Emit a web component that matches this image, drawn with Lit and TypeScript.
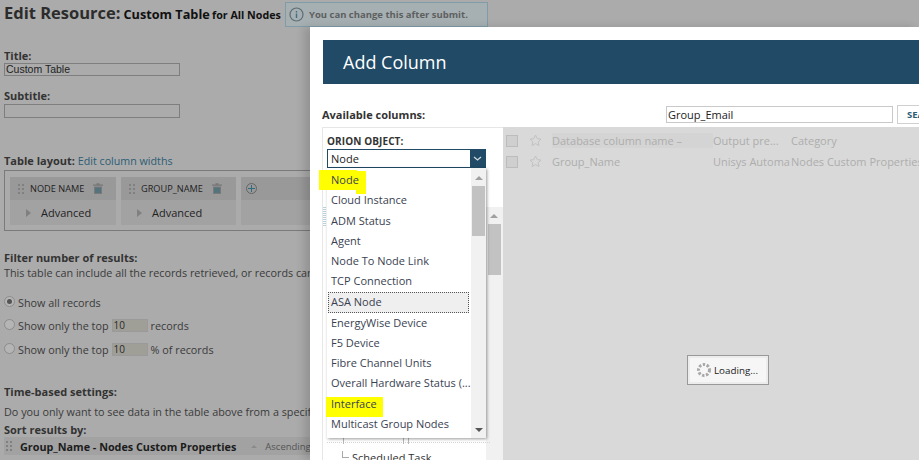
import { LitElement, html, css, svg } from 'lit';
import { customElement } from 'lit/decorators.js';

const OBJECTS = [
  { label: 'Node', cls: 'mark-node' },
  { label: 'Cloud Instance' },
  { label: 'ADM Status' },
  { label: 'Agent' },
  { label: 'Node To Node Link' },
  { label: 'TCP Connection' },
  { label: 'ASA Node', cls: 'focus' },
  { label: 'EnergyWise Device' },
  { label: 'F5 Device' },
  { label: 'Fibre Channel Units' },
  { label: 'Overall Hardware Status (...' },
  { label: 'Interface', cls: 'mark-iface' },
  { label: 'Multicast Group Nodes' },
];

const trash = svg`<svg width="10" height="11" viewBox="0 0 10 11"><path d="M3.5 .8h3M0 2.2h10" stroke="#777" stroke-width="1.2" fill="none"/><path d="M1 3.5h8V11H1z" fill="#7a7a7a"/><path d="M3 4.5V10M5 4.5V10M7 4.5V10" stroke="#2f6c80" stroke-width="1"/></svg>`;
const grip = svg`<svg width="6" height="10" viewBox="0 0 6 10"><g fill="#808080"><rect width="2" height="2"/><rect x="4" width="2" height="2"/><rect y="4" width="2" height="2"/><rect x="4" y="4" width="2" height="2"/><rect y="8" width="2" height="2"/><rect x="4" y="8" width="2" height="2"/></g></svg>`;
const star = svg`<svg width="13" height="13" viewBox="0 0 13 13"><path d="M6.5 1l1.7 3.6 3.8.5-2.8 2.6.7 3.8-3.4-1.9-3.4 1.9.7-3.8L1 5.1l3.8-.5z" fill="none" stroke="#c2c2c2"/></svg>`;

@customElement('app-root')
export class AppRoot extends LitElement {
  static styles = css`
    :host {
      display: block;
      position: relative;
      width: 919px;
      height: 460px;
      overflow: hidden;
      background: #ababab;
      font-family: 'Open Sans', 'Noto Sans', sans-serif;
      font-size: 10.8px;
      color: #2b2b2b;
    }

    .page {
      display: flex;
      flex-direction: column;
      width: 310px;
      padding: 0 0 0 4px;
      box-sizing: border-box;
      white-space: nowrap;
    }

    .title-row {
      display: flex;
      align-items: baseline;
      height: 27px;
      width: 480px;
      padding-top: 1px;
      box-sizing: border-box;
      font-weight: 700;
      color: #222;
    }
    .title-row h1 {
      margin: 0 3px 0 0;
      font-size: 16.5px;
      line-height: 24px;
      color: #2c2c2c;
    }
    .title-row .res {
      font-size: 12.7px;
      color: #111;
    }
    .title-row .res small {
      font-size: 10.7px;
      margin-left: -1px;
    }

    .hint {
      position: absolute;
      left: 285px;
      top: 2px;
      width: 203px;
      height: 25px;
      box-sizing: border-box;
      display: flex;
      align-items: center;
      gap: 5px;
      padding-left: 3px;
      white-space: nowrap;
      background: #a6afb2;
      border: 1px solid #7f9ca8;
      font-size: 9.5px;
      font-weight: 700;
      color: #5d6060;
    }

    label.head {
      display: block;
      font-weight: 700;
      font-size: 11px;
      line-height: 15px;
      color: #333;
    }
    .title-label { margin-top: 21px; }
    .sub-label { margin-top: 12px; }

    .text {
      width: 176px;
      height: 13px;
      box-sizing: border-box;
      border: 1px solid #7e7e7e;
      font-family: 'Liberation Sans', sans-serif;
      font-size: 10.5px;
      line-height: 11px;
      padding-left: 1px;
      color: #222;
    }
    .subtitle { height: 14px; margin-top: 1px; }

    .layout-label { margin-top: 35px; }
    .layout-label a { color: #2d5d75; font-weight: 400; font-size: 10.7px; }

    .columns {
      display: flex;
      gap: 5px;
      width: 330px;
      height: 61px;
      margin-top: 1px;
      padding: 6px 5px;
      box-sizing: border-box;
      border: 1px solid #7a7a7a;
    }
    .col {
      display: flex;
      flex-direction: column;
      background: #a2a2a2;
      flex: none;
      height: 48px;
    }
    .col .top {
      display: flex;
      align-items: center;
      height: 23px;
      padding-left: 8px;
      background: #999;
      color: #222;
      font-size: 9.2px;
    }
    .col .top .name { margin-left: 6px; }
    .col .top .del { margin-left: 9px; display: flex; }
    .col .adv {
      display: flex;
      align-items: center;
      height: 25px;
      padding-left: 16px;
      gap: 10px;
      color: #222;
      font-size: 11px;
    }
    .tri {
      width: 0;
      height: 0;
      border-left: 5px solid #808080;
      border-top: 4px solid transparent;
      border-bottom: 4px solid transparent;
    }
    .col.add { flex: 1; }
    .plus {
      width: 9px;
      height: 9px;
      border: 1px solid #666;
      border-radius: 50%;
      margin-left: 5px;
      position: relative;
    }
    .plus::before, .plus::after {
      content: '';
      position: absolute;
      background: #2f6c80;
    }
    .plus::before { left: 1px; right: 1px; top: 4px; height: 1px; }
    .plus::after { top: 1px; bottom: 1px; left: 4px; width: 1px; }

    .filter-label { margin-top: 19px; }
    .filter-desc, .time-desc { line-height: 16px; color: #3a3a3a; }

    .radios {
      display: flex;
      flex-direction: column;
      gap: 7.5px;
      margin-top: 13px;
    }
    .radio {
      display: flex;
      align-items: center;
      height: 16px;
      color: #3a3a3a;
    }
    .dot {
      width: 9px;
      height: 9px;
      border-radius: 50%;
      border: 1px solid #8c8c8c;
      background: #b5b5b5;
      margin-right: 3px;
      margin-bottom: 2px;
      position: relative;
    }
    .dot.on::after {
      content: '';
      position: absolute;
      inset: 2px;
      border-radius: 50%;
      background: #555;
    }
    .num {
      width: 36px;
      height: 13px;
      margin: 0 3px;
      padding-left: 1px;
      box-sizing: border-box;
      background: #a09f97;
      border: 1px solid #9a9a9a;
      font-size: 10px;
      line-height: 11px;
      color: #2a2a2a;
    }

    .time-label { margin-top: 27px; }
    .time-desc { margin-top: 5px; }
    .sort-label { margin-top: 2px; line-height: 14px; }

    .sort {
      display: flex;
      align-items: center;
      width: 330px;
      height: 18px;
      background: #a2a2a2;
      padding-left: 2px;
      box-sizing: border-box;
    }
    .sort .g { display: flex; }
    .sort b { margin-left: 8px; font-size: 10.8px; color: #1c1c1c; }
    .sort .up {
      margin-left: 15px;
      width: 0;
      height: 0;
      border-bottom: 3px solid #8a8a8a;
      border-left: 3px solid transparent;
      border-right: 3px solid transparent;
    }
    .sort .dir { margin-left: 8px; font-size: 9.5px; color: #555; }

    /* the dialog floats over the dimmed page */
    .modal {
      position: absolute;
      left: 310px;
      top: 27px;
      width: 609px;
      height: 433px;
      background: #fff;
      box-shadow: -6px 0 8px rgba(0, 0, 0, 0.14);
      white-space: nowrap;
    }
    .modal-head {
      margin: 13px 0 0 13px;
      height: 44px;
      display: flex;
      align-items: center;
      padding-left: 20px;
      background: #204a66;
      color: #fff;
      font-size: 18px;
    }
    .search-row {
      display: flex;
      align-items: center;
      height: 20px;
      margin-top: 20px;
      margin-left: 12px;
    }
    .search-row label {
      font-weight: 700;
      font-size: 11px;
      color: #333;
      width: 344px;
      flex: none;
    }
    .search {
      width: 227px;
      height: 17px;
      flex: none;
      box-sizing: border-box;
      border: 1px solid #c9c9c9;
      padding-left: 1px;
      font-size: 11px;
      line-height: 15px;
      color: #222;
    }
    .search-btn {
      margin-left: 4px;
      width: 60px;
      height: 19px;
      flex: none;
      box-sizing: border-box;
      border: 1px solid #d0d0d0;
      padding-left: 9px;
      font-size: 9.5px;
      line-height: 17px;
      font-weight: 700;
      color: #2d5d75;
    }

    .body {
      display: flex;
      margin: 3px 0 0 12px;
      height: 340px;
    }
    .side {
      position: relative;
      width: 181px;
      flex: none;
      box-sizing: border-box;
      border: 1px solid #e6e6e6;
      border-width: 1px 0 0 1px;
      padding: 7px 0 0 4px;
    }
    .side .obj {
      font-size: 10px;
      font-weight: 700;
      color: #333;
      line-height: 13px;
      letter-spacing: 0.1px;
    }
    .select {
      display: flex;
      width: 159px;
      height: 19px;
      box-sizing: border-box;
      border: 1px solid #204a66;
      font-size: 11px;
      line-height: 17px;
      padding-left: 3px;
      margin-top: 1px;
      color: #222;
    }
    .select span { flex: 1; }
    .select i {
      width: 15px;
      background: #204a66;
      display: flex;
      align-items: center;
      justify-content: center;
    }

    .side-bar {
      position: absolute;
      right: 0;
      top: 79px;
      width: 17px;
      bottom: 0;
      background: #f1f1f1;
    }
    .side-bar .thumb {
      position: absolute;
      left: 2px;
      right: 2px;
      top: 17px;
      height: 51px;
      background: #c2c2c2;
    }
    .arrow-up, .arrow-down {
      position: absolute;
      left: 4px;
      width: 0;
      height: 0;
      border-left: 4px solid transparent;
      border-right: 4px solid transparent;
    }
    .arrow-up { top: 7px; border-bottom: 4px solid #a0a0a0; }
    .arrow-down { bottom: 6px; border-top: 4px solid #555; }

    .splitter {
      position: absolute;
      left: 0;
      top: 79px;
      width: 3px;
      height: 20px;
      background: repeating-linear-gradient(#b9d2dc 0 1px, #fff 1px 2px);
    }

    .tree-line {
      position: absolute;
      left: 4px;
      right: 13px;
      top: 314px;
      border-top: 1px dotted #d5d5d5;
    }
    .tick {
      position: absolute;
      top: 310px;
      width: 1px;
      height: 6px;
      background: #b8b8b8;
    }

    .tree-leaf {
      position: absolute;
      left: 19px;
      top: 322px;
      display: flex;
      align-items: flex-end;
      font-size: 11px;
      color: #333;
    }
    .tree-leaf::before {
      content: '';
      width: 6px;
      height: 6px;
      border-left: 1px solid #aaa;
      border-bottom: 1px solid #aaa;
      margin: 0 3px 7px 0;
    }

    .drop {
      position: absolute;
      left: 4px;
      top: 40px;
      width: 159px;
      height: 270px;
      box-sizing: border-box;
      background: #fff;
      box-shadow: 1px 1px 3px rgba(0, 0, 0, 0.4);
      z-index: 2;
    }
    .drop ul {
      list-style: none;
      margin: 0;
      padding: 2px 0 0 1px;
    }
    .drop li {
      position: relative;
      height: 20.25px;
      line-height: 20px;
      padding-left: 3px;
      width: 141px;
      box-sizing: border-box;
      font-size: 11px;
      color: #3a3f52;
    }
    .drop li.focus {
      background: #efefef;
      outline: 1px dotted #555;
      outline-offset: -1px;
      height: 21px;
    }
    .drop li span { position: relative; z-index: 1; }
    .mark-node::before, .mark-node::after, .mark-iface::before {
      content: '';
      position: absolute;
      background: #ff0;
    }
    .mark-node::before { left: -9px; top: 0; width: 38px; height: 20px; }
    .mark-node::after { left: 28px; top: 1px; width: 10px; height: 23px; }
    .mark-iface::before { left: -2px; top: 3px; width: 57px; height: 20px; }
    .drop .bar {
      position: absolute;
      right: 0;
      top: 0;
      bottom: 0;
      width: 15px;
      background: #f1f1f1;
    }
    .drop .bar .thumb {
      position: absolute;
      left: 1px;
      right: 1px;
      top: 18px;
      height: 50px;
      background: #c2c2c2;
    }

    .grid {
      flex: 1;
      background: #d9d9d9;
      color: #adadad;
      font-size: 11px;
      position: relative;
    }
    .grid-row {
      display: flex;
      align-items: center;
      height: 21px;
      padding-left: 3px;
    }
    .grid-row.first { margin-top: 3px; }
    .cb {
      width: 10px;
      height: 10px;
      border: 1px solid #bcbcbc;
      background: #cfcfcf;
      margin-right: 11px;
      flex: none;
    }
    .grid-row .c1 { width: 161px; margin-left: 10px; flex: none; }
    .grid-row .c2 { width: 78px; flex: none; overflow: hidden; }
    .grid-row .c3 { flex: none; }
    .grid-row.first .c1 { background: #d4d4d4; }

    .loading {
      position: absolute;
      left: 184px;
      top: 228px;
      width: 82px;
      height: 30px;
      box-sizing: border-box;
      border: 1px solid #999;
      background: #f6f6f6;
      box-shadow: inset 0 0 0 2px #ececec;
      display: flex;
      align-items: center;
      gap: 2px;
      padding-left: 8px;
      font-size: 9.8px;
      color: #222;
    }
  `;

  render() {
    return html`
      <div class="page">
        <div class="title-row">
          <h1>Edit Resource:</h1>
          <span class="res">Custom Table <small>for All Nodes</small></span>
        </div>
        <label class="head title-label">Title:</label>
        <div class="text">Custom Table</div>
        <label class="head sub-label">Subtitle:</label>
        <div class="text subtitle"></div>

        <label class="head layout-label">Table layout: <a>Edit column widths</a></label>
        <div class="columns">
          <div class="col" style="width:106px">
            <div class="top">${grip}<span class="name">NODE NAME</span><span class="del">${trash}</span></div>
            <div class="adv"><span class="tri"></span>Advanced</div>
          </div>
          <div class="col" style="width:115px">
            <div class="top">${grip}<span class="name">GROUP_NAME</span><span class="del">${trash}</span></div>
            <div class="adv"><span class="tri"></span>Advanced</div>
          </div>
          <div class="col add">
            <div class="top" style="padding-left:0"><span class="plus"></span></div>
          </div>
        </div>

        <label class="head filter-label">Filter number of results:</label>
        <div class="filter-desc">This table can include all the records retrieved, or records can</div>
        <div class="radios">
          <div class="radio"><span class="dot on"></span>Show all records</div>
          <div class="radio"><span class="dot"></span>Show only the top<span class="num">10</span>records</div>
          <div class="radio"><span class="dot"></span>Show only the top<span class="num">10</span>% of records</div>
        </div>

        <label class="head time-label">Time-based settings:</label>
        <div class="time-desc">Do you only want to see data in the table above from a specific</div>
        <label class="head sort-label">Sort results by:</label>
        <div class="sort">
          <span class="g">${grip}</span>
          <b>Group_Name - Nodes Custom Properties</b>
          <span class="up"></span>
          <span class="dir">Ascending</span>
        </div>
      </div>

      <div class="hint">
        <svg width="15" height="15" viewBox="0 0 15 15">
          <circle cx="7.5" cy="7.5" r="6.5" fill="none" stroke="#5d6d75" stroke-width="1.2"></circle>
          <path d="M7.5 6.5v4.5M7.5 4v1.4" stroke="#3f6f85" stroke-width="1.4"></path>
        </svg>
        You can change this after submit.
      </div>

      <div class="modal">
        <div class="modal-head">Add Column</div>
        <div class="search-row">
          <label>Available columns:</label>
          <div class="search">Group_Email</div>
          <div class="search-btn">SEARCH</div>
        </div>
        <div class="body">
          <div class="side">
            <div class="obj">ORION OBJECT:</div>
            <div class="select">
              <span>Node</span>
              <i><svg width="9" height="5" viewBox="0 0 9 5"><path d="M1 1l3.5 3L8 1" fill="none" stroke="#cfd8de" stroke-width="1.3"></path></svg></i>
            </div>
            <div class="splitter"></div>
            <div class="side-bar">
              <span class="arrow-up"></span>
              <div class="thumb"></div>
            </div>
            <div class="tree-line"></div>
            <div class="tick" style="left:20px"></div>
            <div class="tick" style="left:80px"></div>
            <div class="tick" style="left:85px"></div>
            <div class="tree-leaf">Scheduled Task</div>
            <div class="drop">
              <ul>
                ${OBJECTS.map((o) => html`<li class=${o.cls ?? ''}><span>${o.label}</span></li>`)}
              </ul>
              <div class="bar">
                <span class="arrow-up" style="top:8px"></span>
                <div class="thumb"></div>
                <span class="arrow-down"></span>
              </div>
            </div>
          </div>
          <div class="grid">
            <div class="grid-row first">
              <span class="cb"></span>${star}
              <span class="c1">Database column name –</span>
              <span class="c2">Output pre...</span>
              <span class="c3">Category</span>
            </div>
            <div class="grid-row">
              <span class="cb"></span>${star}
              <span class="c1">Group_Name</span>
              <span class="c2">Unisys Automa</span>
              <span class="c3">Nodes Custom Properties</span>
            </div>
            <div class="loading">
              <svg width="16" height="16" viewBox="0 0 16 16">
                <circle cx="8" cy="8" r="5.5" fill="none" stroke="#a8a8a8" stroke-width="3" stroke-dasharray="2.4 1.6"></circle>
              </svg>
              Loading...
            </div>
          </div>
        </div>
      </div>
    `;
  }
}
